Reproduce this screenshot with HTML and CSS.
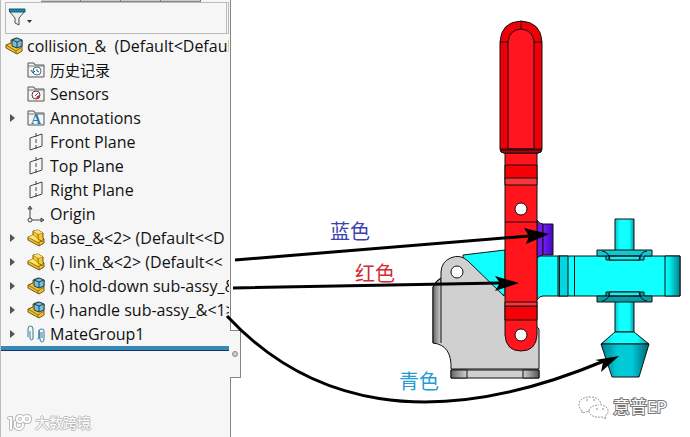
FILE: index.html
```html
<!DOCTYPE html>
<html lang="zh-CN">
<head>
<meta charset="utf-8">
<title>collision_&amp;</title>
<link rel="stylesheet" href="styles.css">
</head>
<body>
<svg class="defs" aria-hidden="true">
  <symbol id="part" viewBox="0 0 18 18">
    <path d="M1 8 6 6V2l5-1 5 3v5l1 1v4l-5 3L1 11z" fill="#f5c72c" stroke="#705416" stroke-linejoin="round"/>
    <path d="m6 2 5 3 5-1M11 5v5l5 3M1 8l10 6 6-4M12 14v3M6 6l5 4" fill="none" stroke="#8b6818"/>
    <path d="m6 2 5-1 5 3-5 1zM1 8l5-2 5 4-1 2z" fill="#ffe46b"/>
  </symbol>
  <symbol id="assembly" viewBox="0 0 18 18">
    <path d="M1 8 6 6V3l5-2 6 2v11l-5 3L1 11z" fill="#f5c72c" stroke="#705416" stroke-linejoin="round"/>
    <path d="m1 8 10 6 6-4M11 14v3" fill="none" stroke="#8b6818"/>
    <path d="m7 3 5-2 5 2v6l-5 2-5-2z" fill="#78bddd" stroke="#1d4354" stroke-linejoin="round"/>
    <path d="m7 3 5 2 5-2M12 5v6" fill="none" stroke="#1d4354"/>
  </symbol>
  <symbol id="folder" viewBox="0 0 18 18">
    <path d="M1 16V2h6l1 2h9v12z" fill="#f3f3f3" stroke="#555"/>
    <path d="M1 5h16" stroke="#777"/>
  </symbol>
  <symbol id="plane" viewBox="0 0 18 18">
    <path d="M3 5 15 1v12L3 17z" fill="none" stroke="#444"/>
    <path d="M9 0v18" stroke="#444" stroke-dasharray="4 2"/>
  </symbol>
</svg>
<main class="workspace">
  <aside class="panel">
    <div class="tabs"><span></span><span></span><span></span><span></span></div>
    <div class="filter">
      <button class="filter-button" aria-label="Filter">
        <svg width="24" height="20" viewBox="0 0 24 20">
          <path d="M1 3h16l-6 7v7l-4-2v-5z" fill="#e8edef" stroke="#45545b"/>
          <path d="M1 1h16v3H2z" fill="#2183ad" stroke="#155b7a"/>
          <path d="M19 12h5l-2.500 3z" fill="#333"/>
        </svg>
      </button>
    </div>
    <ul class="tree">
      <li class="row root"><svg class="icon"><use href="#assembly"/></svg><span class="name">collision_&amp;&nbsp; (Default&lt;Defaul</span></li>
      <li class="row"><span class="twist"></span><svg class="icon" viewBox="0 0 18 18"><use href="#folder"/><circle cx="10" cy="10" r="4" fill="#fff" stroke="#3b738c"/><path d="M10 8v2l2 1M4 9l2 3 2-2" fill="none" stroke="#225c78"/></svg><span class="name han">历史记录</span></li>
      <li class="row"><span class="twist"></span><svg class="icon" viewBox="0 0 18 18"><use href="#folder"/><circle cx="9" cy="10" r="4" fill="#fff" stroke="#444"/><path d="M9 14a4 4 0 0 0 4-4l-3 1z" fill="#c52f25"/><path d="m8 11 3-3" stroke="#b32a20"/></svg><span class="name">Sensors</span></li>
      <li class="row"><button class="twist arrow" aria-label="Expand Annotations"></button><svg class="icon" viewBox="0 0 18 18"><use href="#folder"/><text class="glyph" x="9" y="15">A</text></svg><span class="name">Annotations</span></li>
      <li class="row"><span class="twist"></span><svg class="icon"><use href="#plane"/></svg><span class="name">Front Plane</span></li>
      <li class="row"><span class="twist"></span><svg class="icon"><use href="#plane"/></svg><span class="name">Top Plane</span></li>
      <li class="row"><span class="twist"></span><svg class="icon"><use href="#plane"/></svg><span class="name">Right Plane</span></li>
      <li class="row"><span class="twist"></span><svg class="icon" viewBox="0 0 18 18"><path d="M3 14V2M3 15h13M1 4l2-3 2 3zM14 13l3 2-3 2z" fill="#f5f5f5" stroke="#444"/><circle cx="3" cy="15" r="2" fill="#f5f5f5" stroke="#444"/></svg><span class="name">Origin</span></li>
      <li class="row"><button class="twist arrow" aria-label="Expand base"></button><svg class="icon"><use href="#part"/></svg><span class="name">base_&amp;&lt;2&gt; (Default&lt;&lt;D</span></li>
      <li class="row"><button class="twist arrow" aria-label="Expand link"></button><svg class="icon"><use href="#part"/></svg><span class="name">(-) link_&amp;&lt;2&gt; (Default&lt;&lt;</span></li>
      <li class="row"><button class="twist arrow" aria-label="Expand hold-down"></button><svg class="icon"><use href="#assembly"/></svg><span class="name">(-) hold-down sub-assy_&amp;</span></li>
      <li class="row"><button class="twist arrow" aria-label="Expand handle"></button><svg class="icon"><use href="#assembly"/></svg><span class="name">(-) handle sub-assy_&amp;&lt;1&gt;</span></li>
      <li class="row"><button class="twist arrow" aria-label="Expand MateGroup1"></button><svg class="icon" viewBox="0 0 18 18"><path d="M3 6v7q0 2 1.500 2T6 13V4q0-3-2.500-3T1 4v8M12 5v7q0 2-1.500 2M12 14V6q0-2 2.500-2T17 6v8q0 3-2 3t-2-3V7M15 7v6" fill="none" stroke="#347b9e"/></svg><span class="name">MateGroup1</span></li>
    </ul>
    <div class="rollback"></div>
    <button class="splitter" aria-label="Collapse panel"><i></i></button>
    <div class="brand">
      <svg width="26" height="18" viewBox="0 0 26 18"><g fill="none" stroke-linecap="round"><path d="M2 4h2v11M8 8q-1 7 4 7 4 0 4-5M10 5q0-3 3-3t3 3-3 3-3-3M17 5q0-3 3-3t3 3-3 3-3-3" stroke="#bbb" stroke-width="4"/><path d="M2 4h2v11M8 8q-1 7 4 7 4 0 4-5M10 5q0-3 3-3t3 3-3 3-3-3M17 5q0-3 3-3t3 3-3 3-3-3" stroke="#fff" stroke-width="2"/></g></svg>
      <span>大数跨境</span>
    </div>
  </aside>
  <section class="viewport">
    <svg class="drawing" viewBox="231 0 459 437" preserveAspectRatio="xMinYMin meet" role="img" aria-label="Toggle clamp">
      <defs>
        <linearGradient id="gl"><stop stop-color="#666"/><stop offset="1" stop-color="#d0d0d0"/></linearGradient>
        <linearGradient id="gr"><stop stop-color="#d0d0d0"/><stop offset="1" stop-color="#555"/></linearGradient>
        <linearGradient id="cr"><stop stop-color="#0ff"/><stop offset=".3" stop-color="#0ee"/><stop offset="1" stop-color="#07818c"/></linearGradient>
        <linearGradient id="rod"><stop stop-color="#00c4d0"/><stop offset=".25" stop-color="#10ffff"/><stop offset=".75" stop-color="#10ffff"/><stop offset="1" stop-color="#009aa6"/></linearGradient>
        <linearGradient id="cup"><stop stop-color="#00808c"/><stop offset=".35" stop-color="#00c9d8"/><stop offset=".65" stop-color="#00c9d8"/><stop offset="1" stop-color="#00626c"/></linearGradient>
        <linearGradient id="vio"><stop stop-color="#7220ff"/><stop offset="1" stop-color="#4308b4"/></linearGradient>
        <linearGradient id="rim" x2="0" y2="1"><stop stop-color="#10cbd5"/><stop offset="1" stop-color="#079aa6"/></linearGradient>
      </defs>
      <g stroke="#111">
        <path d="M537 256h143v40H543q-4 0-6 4z" fill="#10ffff"/>
        <path d="M665 256h15v40h-15z" fill="url(#cr)"/>
        <path d="M558 256h10v40h-10z" fill="#05d5df"/>
        <path d="M559.500 256v40M574.500 256v40" fill="none"/>
        <path d="M615 219h19v32h-19zM615 301h19v31h-19z" fill="url(#rod)"/>
        <path d="M597 250h55v6h-8v4h-38v-4h-9zM597 302h55v-6h-8v-4h-38v4h-9z" fill="url(#rim)"/>
        <path d="M609 256h31v4h-31zM609 292h31v4h-31z" fill="#10f0f4"/>
        <path d="M602 251q7 1 8 9M647 251q-7 1-8 9M602 301q7-1 8-9M647 301q-7-1-8-9M606 256h37M606 296h37" fill="none"/>
        <path d="M615 332h19l15 12h-48z" fill="url(#rod)"/>
        <path d="M601 344h48l-10 33h-27z" fill="url(#cup)"/>
        <path d="m463 255 42-5v45H463z" fill="#10ffff"/>
        <path d="M441 278q-5 2-8 9v56h8z" fill="url(#gl)"/>
        <path d="M433 343h8V272a16 16 0 0 1 27-11l36 35h33v31l2 2v40h-88q1-24-18-26z" fill="#d0d0d0" stroke="none"/>
        <path d="M433 283h8v60h-8z" fill="url(#gl)" stroke="none"/>
        <path d="M433 343V287q3-6 8-9M433 343q19 2 18 26h88v-40l-2-2M441 343V272a16 16 0 0 1 27-11l36 35" fill="none"/>
        <path d="M451 370h88v8h-88z" fill="#d0d0d0"/>
        <path d="M451 370h16v8h-16z" fill="url(#gl)"/><path d="M523 370h16v8h-16z" fill="url(#gr)"/>
        <circle cx="457" cy="272" r="6" fill="#fff"/>
        <path d="M537 220q2 4 6 4v31q-3 0-6 3z" fill="#7817eb"/><path d="M543 224h10v31h-10z" fill="url(#vio)"/>
        <path d="M505 153h32v182q-1 16-16 16t-16-16z" fill="#ff151b"/>
        <path d="M505 165h32v14h-32zM505 306h32v14h-32z" fill="#f50007"/>
        <path d="M505 178h32v7h-32zM505 302h32v4h-32z" fill="#f7353b"/>
        <path d="M505 222h32" fill="none"/>
        <circle cx="521" cy="209" r="6" fill="#fff"/><circle cx="521" cy="335" r="6" fill="#fff"/>
        <path d="M500 42q1-20 21-21 20 1 21 21v107q0 4-4 4h-34q-4 0-4-4z" fill="#ef0009"/>
        <path d="M508 149V42q1-12 13-13 12 1 13 13v107z" fill="#ff151f"/>
        <path d="M500 42h8M534 42h8M521 21v8M500 149h42" fill="none"/>
        <path d="M501 150h40q0 3-3 3h-34q-3 0-3-3" fill="#b90008"/>
      </g>
      <g fill="none" stroke="#000" stroke-width="3">
        <path d="m235 260 294-24M233 288l267-5M227 316c80 86 200 119 377 45"/>
      </g>
      <g fill="#000">
        <path d="m549 234-25-6 5 8-3 8zM519 283l-24-7 5 7-5 8zM619 356l-24 4 8 2-2 10z"/>
      </g>
      <g class="label">
        <text x="330" y="239" fill="#3c42b4">蓝色</text>
        <text x="355" y="281" fill="#d32b32">红色</text>
        <text x="399" y="389" fill="#249bd3">青色</text>
      </g>
      <g fill="#fff" stroke="#999" stroke-dasharray="2 1">
        <path d="M582 411c-6-6-3-14 8-14 8 0 11 4 11 8 8 1 9 8 4 11l1 3-4-2c-8 1-13-2-13-6l-7 2z"/>
        <path d="M589 411c0-4 5-6 10-6" fill="none"/>
      </g>
      <path d="M586 400h2M593 400h2M596 409h2M602 409h2" stroke="#888"/>
      <text class="credit" x="613" y="413">意普EP</text>
    </svg>
  </section>
</main>
</body>
</html>
```
FILE: styles.css
```css
* { box-sizing: border-box; }
body { margin: 0; background: #fff; font-family: "Open Sans", "Noto Sans CJK SC", sans-serif; }
button { padding: 0; border: 0; background: none; }
.defs { display: none; }
.workspace { display: grid; grid-template-columns: 231px 1fr; min-height: 100vh; }
.panel { position: relative; display: flex; flex-direction: column; background: #f6f6f6; border-left: 1px solid #bbb; border-right: 1px solid #858585; }
.tabs { display: flex; height: 2px; padding-left: 40px; }
.tabs span { width: 40px; background: #ccc; border-right: 1px solid #777; border-bottom: 1px solid #888; }
.filter { display: flex; align-items: center; height: 32px; margin: 0 1px 0 4px; border: 1px solid #bbb; border-right: 3px double #bbb; }
.filter-button { display: flex; margin-left: 2px; }
.tree { margin: 0; padding: 0; list-style: none; }
.row { display: flex; align-items: center; height: 24px; margin-right: 1px; padding-left: 4px; overflow: hidden; white-space: nowrap; font-size: 16px; line-height: 24px; color: #111; }
.han { font-size: 15px; }
.twist { flex: none; width: 22px; height: 24px; }
.arrow::before { content: ""; display: block; width: 0; margin-left: 5px; border: 4px solid transparent; border-left: 5px solid #555; border-right: 0; }
.icon { flex: none; width: 18px; height: 18px; margin-right: 5px; }
.root .icon { margin-right: 4px; }
.glyph { font: bold 14px "Liberation Serif", serif; text-anchor: middle; fill: #287fa8; }
.rollback { height: 5px; margin-right: 1px; background: #3789b5; border-bottom: 1px solid #17336e; }
.splitter { position: absolute; top: 330px; left: 229px; display: grid; place-items: center; width: 11px; height: 48px; background: #f6f6f6; border: 1px solid #858585; border-left: 0; }
.splitter i { width: 6px; height: 6px; background: #ccc; border: 1px solid #888; border-radius: 50%; }
.brand { display: flex; align-items: center; gap: 2px; margin: auto 0 4px 6px; font-size: 14px; line-height: 20px; color: #fff; text-shadow: 1px 0 #bbb, -1px 0 #bbb, 0 1px #bbb, 0 -1px #bbb; }
.viewport { min-width: 0; }
.drawing { display: block; width: 100%; overflow: visible; position: relative; }
.label { font: 20px "Noto Sans CJK SC", sans-serif; }
.credit { font: 17px "Open Sans", "Noto Sans CJK SC", sans-serif; fill: #fff; stroke: #777; stroke-width: 2px; paint-order: stroke; }
```
